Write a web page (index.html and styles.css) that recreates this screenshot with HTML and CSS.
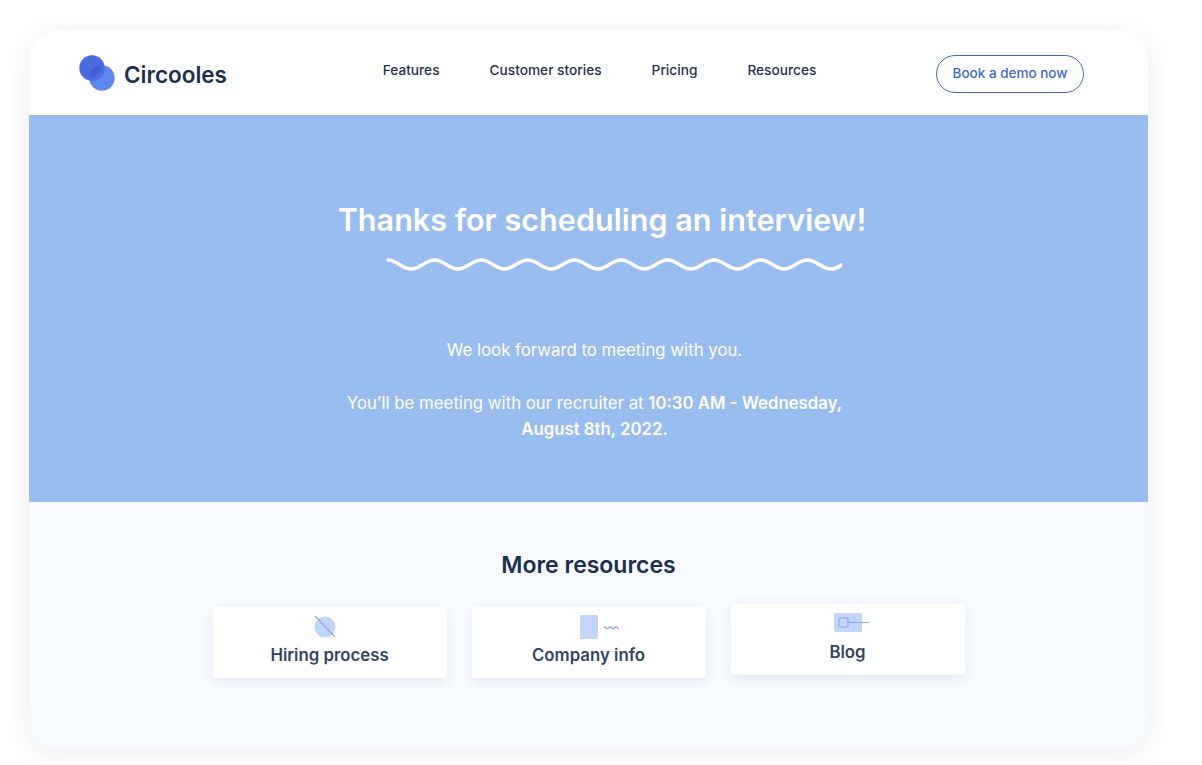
FILE: index.html
```html
<!DOCTYPE html>
<html lang="en">
<head>
    <meta charset="UTF-8">
    <meta name="viewport" content="width=device-width, initial-scale=1.0">
    <title>Circooles - Thanks</title>
    <link rel="stylesheet" href="styles.css">
</head>
<body>
    <div class="frame">
        <header class="topbar">
            <a class="logo" href="#">
                <svg class="logo-mark" width="36" height="36" viewBox="0 0 36 36">
                    <circle cx="23" cy="23" r="12.7" fill="#5f88ee"/>
                    <circle cx="13" cy="13" r="12.7" fill="#4a6cdf"/>
                    <path d="M22.5 10.3a12.7 12.7 0 0 0-12.2 12.2a12.7 12.7 0 0 0 12.2-12.2z" fill="#3f5fd6"/>
                </svg>
                <span class="logo-name">Circooles</span>
            </a>
            <nav class="links">
                <a href="#">Features</a>
                <a href="#">Customer stories</a>
                <a href="#">Pricing</a>
                <a href="#">Resources</a>
            </nav>
            <a class="demo-btn" href="#">Book a demo now</a>
        </header>

        <section class="hero">
            <h1>Thanks for scheduling an interview!</h1>
            <svg class="wave" width="456" height="14" viewBox="0 0 456 14">
                <path d="M2 3c9 0 14 9 23.3 9s14-9 23.3-9 14 9 23.3 9 14-9 23.3-9 14 9 23.3 9 14-9 23.3-9 14 9 23.3 9 14-9 23.3-9 14 9 23.3 9 14-9 23.3-9 14 9 23.3 9 14-9 23.3-9 14 9 23.3 9 14-9 23.3-9 14 9 23.3 9 14-9 23.3-9 14 9 23.3 9 14-9 23.3-9 14 9 23.3 9c5 0 8-2 11-4" fill="none" stroke="#fff" stroke-width="3.600" stroke-linecap="round"/>
            </svg>
            <div class="message">
                <p>We look forward to meeting with you.</p>
                <p>You’ll be meeting with our recruiter at <strong>10:30 AM - Wednesday,</strong><br><strong>August 8th, 2022.</strong></p>
            </div>
        </section>

        <section class="resources">
            <h2>More resources</h2>
            <div class="cards">
                <a class="card" href="#">
                    <svg width="60" height="24" viewBox="0 0 60 24">
                        <circle cx="25" cy="12" r="10.500" fill="#c1d6f9"/>
                        <path d="M15 1l20 21" stroke="#8fa9dd" stroke-width="1.200"/>
                    </svg>
                    <span>Hiring process</span>
                </a>
                <a class="card" href="#">
                    <svg width="60" height="24" viewBox="0 0 60 24">
                        <rect x="21" y="0" width="18" height="24" rx="1" fill="#c1d6f9"/>
                        <path d="M45 12c1.500 0 1.500 1.500 3 1.500s1.500-1.500 3-1.500 1.500 1.500 3 1.500 1.500-1.500 3-1.500 1.500 1.500 3 1.500 1-1 1.500-1.500" fill="none" stroke="#8fa9e3" stroke-width="1.300"/>
                    </svg>
                    <span>Company info</span>
                </a>
                <a class="card card-raised" href="#">
                    <svg width="60" height="24" viewBox="0 0 60 24">
                        <rect x="16" y="1" width="28" height="19" rx="1" fill="#c1d6f9"/>
                        <rect x="21" y="6" width="9" height="9" rx="1.500" fill="none" stroke="#8fa9e3" stroke-width="1.200"/>
                        <path d="M30 10.500h21" stroke="#8fa9e3" stroke-width="1.200"/>
                    </svg>
                    <span>Blog</span>
                </a>
            </div>
        </section>
    </div>
</body>
</html>
```

FILE: styles.css
```css
* {
    box-sizing: border-box;
}
body {
    margin: 0;
    background: #fff;
    font-family: 'Inter', sans-serif;
    height: 765px;
    overflow: hidden;
}
a {
    text-decoration: none;
    color: inherit;
}
.frame {
    width: 1119px;
    height: 718px;
    margin: 30px 0 0 29px;
    border-radius: 28px;
    overflow: hidden;
    background: #f7fbff;
    box-shadow: 0 6px 30px rgba(40, 60, 110, 0.09);
}
.topbar {
    height: 85px;
    background: #fff;
    display: flex;
    align-items: center;
    justify-content: space-between;
    padding: 0 64px 0 50px;
}
.logo {
    display: flex;
    align-items: center;
    gap: 9px;
    width: 148px;
    flex-shrink: 0;
}
.logo-mark {
    flex-shrink: 0;
}
.logo-name {
    font-size: 22.500px;
    font-weight: 600;
    color: #1c2f50;
    padding-top: 3px;
}
.links {
    display: flex;
    gap: 50px;
    margin-left: 36px;
    padding-bottom: 6px;
    font-size: 13.700px;
    font-weight: 500;
    color: #1f3150;
}
.demo-btn {
    width: 148px;
    height: 38px;
    margin-top: 3px;
    padding-bottom: 2px;
    border: 1.600px solid #3f69b8;
    border-radius: 19px;
    display: flex;
    align-items: center;
    justify-content: center;
    font-size: 13.500px;
    font-weight: 500;
    color: #3f69c4;
}
.hero {
    height: 387px;
    background: #99bdee;
    color: #fff;
    display: flex;
    flex-direction: column;
    align-items: center;
    padding-top: 83px;
}
.hero h1 {
    margin: 0 0 0 27px;
    font-size: 30.600px;
    line-height: 44px;
    font-weight: 600;
}
.wave {
    display: block;
    margin: 15px 0 0 50px;
}
.message {
    width: 520px;
    margin: 66px 0 0 12px;
    text-align: center;
    font-size: 16.800px;
    line-height: 26px;
}
.message p {
    margin: 0 0 27px;
}
.message strong {
    font-weight: 600;
}
.resources {
    height: 246px;
    display: flex;
    flex-direction: column;
    align-items: center;
    padding-top: 46px;
}
.resources h2 {
    margin: 0;
    font-size: 23px;
    line-height: 34px;
    font-weight: 600;
    color: #1c2f50;
}
.cards {
    display: flex;
    gap: 25px;
    margin-top: 25px;
}
.card {
    width: 234px;
    height: 71px;
    padding-top: 8px;
    background: #fff;
    border-radius: 3px;
    box-shadow: 0 4px 12px rgba(60, 80, 130, 0.1);
    display: flex;
    flex-direction: column;
    align-items: center;
    font-size: 16.800px;
    font-weight: 600;
    color: #34455f;
}
.card svg {
    display: block;
    flex-shrink: 0;
}
.card span {
    margin-top: 6px;
}
.card-raised {
    margin-top: -3px;
}
```
